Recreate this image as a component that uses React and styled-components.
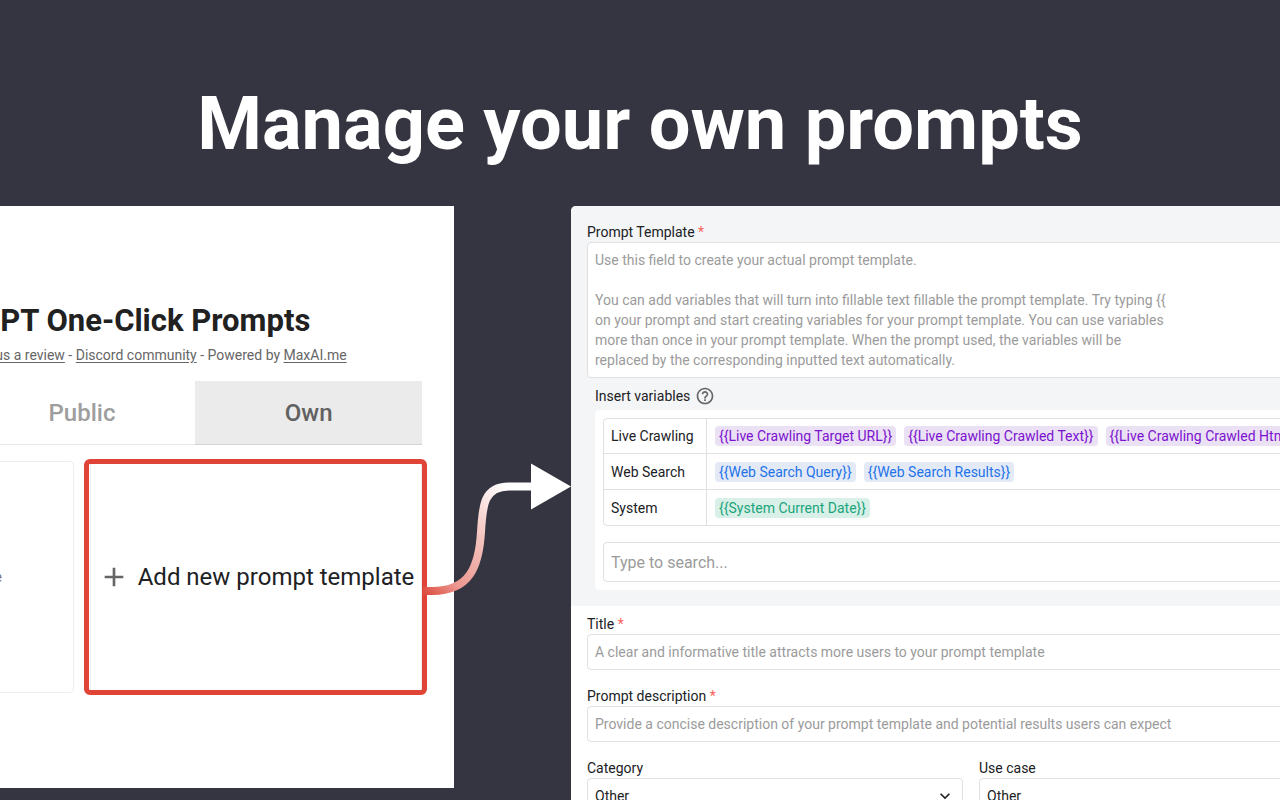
import React from 'react';
import styled, { createGlobalStyle, css } from 'styled-components';

const GlobalStyle = createGlobalStyle`
  * {
    box-sizing: border-box;
  }

  body {
    margin: 0;
    background-color: #353541;
    color: #202124;
    font-family: Roboto, 'Liberation Sans', sans-serif;
    font-size: 14px;
    line-height: 20px;
  }

  button,
  input,
  select,
  textarea {
    font: inherit;
    color: inherit;
  }
`;

const Page = styled.main`
  height: 100vh;
  overflow: hidden;
`;

const Headline = styled.h1`
  margin: 0;
  padding: 80px 0 38px;
  color: #fff;
  font-size: 74px;
  line-height: 88px;
  font-weight: 700;
  text-align: center;
`;

const Stage = styled.div`
  display: grid;
  grid-template-columns: 454fr 709fr;
  column-gap: 117px;
  align-items: start;
`;

/* Left panel */

const PromptsPanel = styled.section`
  display: flex;
  justify-content: flex-end;
  min-width: 0;
  padding: 95px 32px;
  background-color: #fff;
`;

const PromptsContent = styled.div`
  flex: none;
  width: 680px;
`;

const PanelTitle = styled.h2`
  margin: 0 0 4px;
  color: #212121;
  font-size: 31px;
  line-height: 40px;
  font-weight: 700;
  text-align: center;
`;

const PanelLinks = styled.p`
  margin: 0 0 16px;
  color: #666;
  text-align: center;

  a {
    color: inherit;
    text-underline-offset: 2px;
  }
`;

const Tabs = styled.div`
  display: grid;
  grid-template-columns: repeat(3, 1fr);
  margin-bottom: 16px;
`;

const Tab = styled.button`
  height: 64px;
  border: none;
  border-bottom: 1px solid ${({ $active }) => ($active ? '#d4d4d4' : '#e8e8e8')};
  background-color: ${({ $active }) => ($active ? '#ebebeb' : 'transparent')};
  color: ${({ $active }) => ($active ? '#616161' : '#9e9e9e')};
  font-size: 24px;
  font-weight: 500;
  cursor: pointer;
`;

const Cards = styled.div`
  display: grid;
  grid-template-columns: 1fr 1fr;
  gap: 16px;
`;

const cardStyle = css`
  display: flex;
  align-items: center;
  height: 232px;
  border: 1px solid #ededed;
  border-radius: 4px;
  background-color: #fff;
`;

const Card = styled.article`
  ${cardStyle}
  justify-content: flex-end;
  padding-right: 71px;
  color: #757575;
`;

const AddCard = styled.button`
  ${cardStyle}
  position: relative;
  justify-content: center;
  gap: 8px;
  padding: 0;
  font-size: 24px;
  cursor: pointer;

  > svg {
    flex: none;
    fill: #666;
  }
`;

const Highlight = styled.span`
  position: absolute;
  inset: -3px -6px -3px -7px;
  border: 5px solid #df4437;
  border-radius: 6px;
`;

const Connector = styled.svg`
  position: absolute;
  top: 0;
  left: 100%;
  overflow: visible;
`;

/* Right panel */

const FormPanel = styled.section`
  min-width: 0;
  overflow: hidden;
  border-radius: 5px 0 0 0;
  background-color: #fff;
`;

const Form = styled.form`
  min-width: 800px;
`;

const TemplateSection = styled.div`
  padding: 16px;
  background-color: #f4f5f7;
`;

const DetailsSection = styled.div`
  display: grid;
  grid-template-columns: 1fr 1fr;
  gap: 16px;
  padding: 8px 16px 16px;
`;

const Field = styled.div`
  grid-column: ${({ $half }) => ($half ? 'auto' : '1 / -1')};
`;

const Label = styled.label`
  display: block;

  span {
    color: #f8645c;
  }
`;

const controlStyle = css`
  display: block;
  width: 100%;
  padding: 0 7px;
  border: 1px solid #e0e0e0;
  border-radius: 4px;
  background-color: #fff;

  &::placeholder {
    color: #9b9b9b;
    opacity: 1;
  }
`;

const TextInput = styled.input`
  ${controlStyle}
  height: 36px;
`;

const SearchInput = styled.input`
  ${controlStyle}
  height: 40px;
  font-size: 16px;
`;

const TextArea = styled.textarea`
  ${controlStyle}
  height: 136px;
  padding: 7px;
  resize: none;
`;

const SelectBox = styled.div`
  display: grid;
  align-items: center;

  > * {
    grid-area: 1 / 1;
  }

  svg {
    justify-self: end;
    margin-right: 8px;
    fill: #202124;
    pointer-events: none;
  }
`;

const Select = styled.select`
  ${controlStyle}
  height: 36px;
  appearance: none;
`;

const VariablesTitle = styled.div`
  display: flex;
  align-items: center;
  gap: 5px;
  padding: 8px 8px 4px;

  svg {
    fill: #666;
  }
`;

const VariablesBox = styled.div`
  display: grid;
  gap: 16px;
  margin-left: 8px;
  padding: 8px;
  border-radius: 4px;
  background-color: #fff;
`;

const VariablesTable = styled.table`
  width: 100%;
  border: 1px solid #e0e0e0;
  border-radius: 4px;
  border-spacing: 0;

  th,
  td {
    height: 35px;
    padding: 0 8px;
    text-align: left;
    font-weight: 400;
  }

  th {
    width: 103px;
    padding: 0 7px;
    border-right: 1px solid #e0e0e0;
    white-space: nowrap;
  }

  tr:not(:last-child) > * {
    border-bottom: 1px solid #e0e0e0;
  }

  tr:not(:first-child):not(:last-child) > * {
    height: 36px;
  }
`;

const Chips = styled.div`
  display: flex;
  gap: 8px;
`;

const chipColors = {
  purple: { text: '#7b12d0', background: '#ebe1f4' },
  blue: { text: '#1f73e8', background: '#e3eaf6' },
  green: { text: '#1aa57c', background: '#d9f0e8' },
};

const Chip = styled.button`
  height: 20px;
  padding: 0 4px;
  border: none;
  border-radius: 4px;
  background-color: ${({ $color }) => chipColors[$color].background};
  color: ${({ $color }) => chipColors[$color].text};
  white-space: nowrap;
  cursor: pointer;
`;

const templatePlaceholder = [
  'Use this field to create your actual prompt template.',
  '',
  'You can add variables that will turn into fillable text fillable the prompt template. Try typing {{',
  'on your prompt and start creating variables for your prompt template. You can use variables',
  'more than once in your prompt template. When the prompt used, the variables will be',
  'replaced by the corresponding inputted text automatically.',
].join('\n');

const variables = [
  {
    group: 'Live Crawling',
    color: 'purple',
    items: [
      'Live Crawling Target URL',
      'Live Crawling Crawled Text',
      'Live Crawling Crawled Html',
    ],
  },
  {
    group: 'Web Search',
    color: 'blue',
    items: ['Web Search Query', 'Web Search Results'],
  },
  { group: 'System', color: 'green', items: ['System Current Date'] },
];

const tabs = ['Favorites', 'Public', 'Own'];

const SelectField = ({ id, label }) => (
  <Field $half>
    <Label htmlFor={id}>{label}</Label>
    <SelectBox>
      <Select id={id} defaultValue="Other">
        <option>Other</option>
      </Select>
      <svg width="20" height="20" viewBox="0 0 24 24" aria-hidden="true">
        <path d="M7.41 8.59 12 13.17l4.59-4.58L18 10l-6 6-6-6z" />
      </svg>
    </SelectBox>
  </Field>
);

const PromptsList = () => {
  return (
    <PromptsPanel>
      <PromptsContent>
        <PanelTitle>Use ChatGPT One-Click Prompts</PanelTitle>
        <PanelLinks>
          <a href="#guide">How to use a prompt?</a> - <a href="#review">Give us a review</a> -{' '}
          <a href="#discord">Discord community</a> - Powered by <a href="#maxai">MaxAI.me</a>
        </PanelLinks>
        <Tabs role="tablist">
          {tabs.map((tab) => (
            <Tab key={tab} type="button" role="tab" aria-selected={tab === 'Own'} $active={tab === 'Own'}>
              {tab}
            </Tab>
          ))}
        </Tabs>
        <Cards>
          <Card>Your own prompt template</Card>
          <AddCard type="button">
            <svg width="32" height="32" viewBox="0 0 24 24" aria-hidden="true">
              <path d="M19 13h-6v6h-2v-6H5v-2h6V5h2v6h6z" />
            </svg>
            Add new prompt template
            <Highlight>
              <Connector width="150" height="150" viewBox="422 464 150 150" aria-hidden="true">
                <defs>
                  <linearGradient id="flow" gradientUnits="userSpaceOnUse" x1="424" y1="591" x2="508" y2="487">
                    <stop offset="0" stopColor="#de5044" />
                    <stop offset="0.18" stopColor="#ec9790" />
                    <stop offset="0.55" stopColor="#f3c0bb" />
                    <stop offset="1" stopColor="#fff" />
                  </linearGradient>
                </defs>
                <path
                  d="M423 591H432C470 591 479 566 481 532C482.5 505 484 486.5 509 486.5H532"
                  fill="none"
                  stroke="url(#flow)"
                  strokeWidth="8"
                />
                <path d="M531 463.5 571 486.5 531 509.5z" fill="#fff" />
              </Connector>
            </Highlight>
          </AddCard>
        </Cards>
      </PromptsContent>
    </PromptsPanel>
  );
};

const PromptForm = () => {
  return (
    <FormPanel>
      <Form>
        <TemplateSection>
          <Label htmlFor="template">
            Prompt Template <span>*</span>
          </Label>
          <TextArea id="template" placeholder={templatePlaceholder} />
          <VariablesTitle>
            Insert variables
            <svg width="20" height="20" viewBox="0 0 24 24" aria-hidden="true">
              <path d="M11 18h2v-2h-2zm1-16C6.480 2 2 6.480 2 12s4.480 10 10 10 10-4.480 10-10S17.520 2 12 2m0 18c-4.410 0-8-3.590-8-8s3.590-8 8-8 8 3.590 8 8-3.590 8-8 8m0-14c-2.210 0-4 1.790-4 4h2c0-1.100.9-2 2-2s2 .9 2 2c0 2-3 1.750-3 5h2c0-2.250 3-2.500 3-5 0-2.210-1.790-4-4-4" />
            </svg>
          </VariablesTitle>
          <VariablesBox>
            <VariablesTable>
              <tbody>
                {variables.map(({ group, color, items }) => (
                  <tr key={group}>
                    <th scope="row">{group}</th>
                    <td>
                      <Chips>
                        {items.map((item) => (
                          <Chip key={item} type="button" $color={color}>
                            {`{{${item}}}`}
                          </Chip>
                        ))}
                      </Chips>
                    </td>
                  </tr>
                ))}
              </tbody>
            </VariablesTable>
            <SearchInput type="text" placeholder="Type to search..." aria-label="Search variables" />
          </VariablesBox>
        </TemplateSection>
        <DetailsSection>
          <Field>
            <Label htmlFor="title">
              Title <span>*</span>
            </Label>
            <TextInput
              id="title"
              type="text"
              placeholder="A clear and informative title attracts more users to your prompt template"
            />
          </Field>
          <Field>
            <Label htmlFor="description">
              Prompt description <span>*</span>
            </Label>
            <TextInput
              id="description"
              type="text"
              placeholder="Provide a concise description of your prompt template and potential results users can expect"
            />
          </Field>
          <SelectField id="category" label="Category" />
          <SelectField id="use-case" label="Use case" />
        </DetailsSection>
      </Form>
    </FormPanel>
  );
};

const App = () => {
  return (
    <>
      <GlobalStyle />
      <Page>
        <Headline>Manage your own prompts</Headline>
        <Stage>
          <PromptsList />
          <PromptForm />
        </Stage>
      </Page>
    </>
  );
};

export default App;
